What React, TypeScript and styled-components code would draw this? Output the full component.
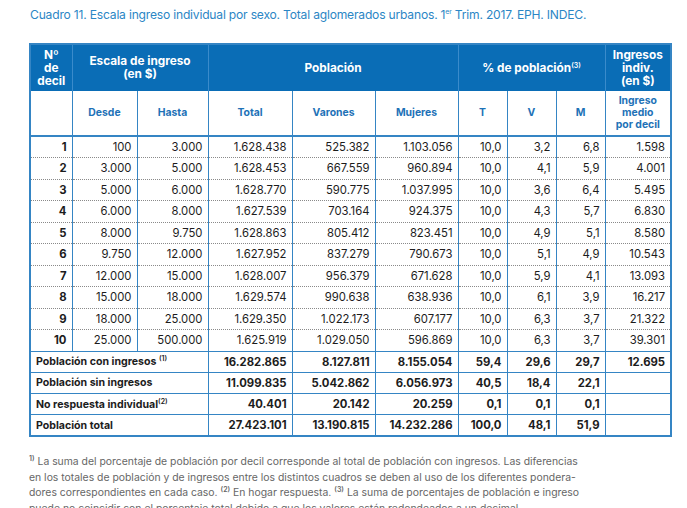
import React from 'react';
import styled, {createGlobalStyle} from 'styled-components';

const GlobalStyle = createGlobalStyle`
  body {
    margin: 0;
    background: #ffffff;
    font-family: Inter, "Open Sans", sans-serif;
  }
`

const widths = [42, 65, 71, 84, 83, 83, 49, 49, 49, 66];

type Row = string[];

const deciles: Row[] = [
    ['1', '100', '3.000', '1.628.438', '525.382', '1.103.056', '10,0', '3,2', '6,8', '1.598'],
    ['2', '3.000', '5.000', '1.628.453', '667.559', '960.894', '10,0', '4,1', '5,9', '4.001'],
    ['3', '5.000', '6.000', '1.628.770', '590.775', '1.037.995', '10,0', '3,6', '6,4', '5.495'],
    ['4', '6.000', '8.000', '1.627.539', '703.164', '924.375', '10,0', '4,3', '5,7', '6.830'],
    ['5', '8.000', '9.750', '1.628.863', '805.412', '823.451', '10,0', '4,9', '5,1', '8.580'],
    ['6', '9.750', '12.000', '1.627.952', '837.279', '790.673', '10,0', '5,1', '4,9', '10.543'],
    ['7', '12.000', '15.000', '1.628.007', '956.379', '671.628', '10,0', '5,9', '4,1', '13.093'],
    ['8', '15.000', '18.000', '1.629.574', '990.638', '638.936', '10,0', '6,1', '3,9', '16.217'],
    ['9', '18.000', '25.000', '1.629.350', '1.022.173', '607.177', '10,0', '6,3', '3,7', '21.322'],
    ['10', '25.000', '500.000', '1.625.919', '1.029.050', '596.869', '10,0', '6,3', '3,7', '39.301'],
];

const totals: {label: string, note?: string, values: Row}[] = [
    {label: 'Población con ingresos ', note: '(1)', values: ['16.282.865', '8.127.811', '8.155.054', '59,4', '29,6', '29,7', '12.695']},
    {label: 'Población sin ingresos', values: ['11.099.835', '5.042.862', '6.056.973', '40,5', '18,4', '22,1', '']},
    {label: 'No respuesta individual', note: '(2)', values: ['40.401', '20.142', '20.259', '0,1', '0,1', '0,1', '']},
    {label: 'Población total', values: ['27.423.101', '13.190.815', '14.232.286', '100,0', '48,1', '51,9', '']},
];

const App: React.FC = () => {
    return (
        <>
            <GlobalStyle/>
            <StyledPage>
                <StyledCorner/>
                <StyledTitle>
                    Cuadro 11. Escala ingreso individual por sexo. Total aglomerados urbanos. 1<sup>er</sup> Trim. 2017. EPH. INDEC.
                </StyledTitle>

                <StyledTable>
                    <colgroup>
                        {widths.map((w, i) => <col key={i} style={{width: w}}/>)}
                    </colgroup>
                    <thead>
                    <StyledTopHead>
                        <th>Nº<br/>de<br/>decil</th>
                        <th colSpan={2}>Escala de ingreso<br/>(en $)</th>
                        <th colSpan={3}>Población</th>
                        <th colSpan={3}>% de población<StyledNote>(3)</StyledNote></th>
                        <th>Ingresos<br/>indiv.<br/>(en $)</th>
                    </StyledTopHead>
                    <StyledSubHead>
                        <th></th>
                        <th>Desde</th>
                        <th>Hasta</th>
                        <th>Total</th>
                        <th>Varones</th>
                        <th>Mujeres</th>
                        <th>T</th>
                        <th>V</th>
                        <th>M</th>
                        <th>Ingreso<br/>medio<br/>por decil</th>
                    </StyledSubHead>
                    </thead>
                    <tbody>
                    {deciles.map((row, i) => (
                        <StyledDataRow key={row[0]} last={i === deciles.length - 1}>
                            {row.map((v, j) => <StyledCell key={j} bold={j === 0}>{v}</StyledCell>)}
                        </StyledDataRow>
                    ))}
                    {totals.map(t => (
                        <StyledTotalRow key={t.label}>
                            <StyledLabelCell colSpan={3}>
                                {t.label}{t.note && <StyledNote>{t.note}</StyledNote>}
                            </StyledLabelCell>
                            {t.values.map((v, j) => <StyledCell key={j} bold>{v}</StyledCell>)}
                        </StyledTotalRow>
                    ))}
                    </tbody>
                </StyledTable>

                <StyledRule/>

                <StyledFootnote>
                    <StyledNote>1)</StyledNote> La suma del porcentaje de población por decil corresponde al total de población con ingresos. Las diferencias<br/>
                    en los totales de población y de ingresos entre los distintos cuadros se deben al uso de los diferentes pondera-<br/>
                    dores correspondientes en cada caso. <StyledNote>(2)</StyledNote> En hogar respuesta. <StyledNote>(3)</StyledNote> La suma de porcentajes de población e ingreso<br/>
                    puede no coincidir con el porcentaje total debido a que los valores están redondeados a un decimal.
                </StyledFootnote>
            </StyledPage>
        </>
    );
};

export default App;

const StyledPage = styled.div`
  width: 687px;
  height: 508px;
  overflow: hidden;
  display: flex;
  flex-direction: column;
  align-items: flex-start;
`
const StyledCorner = styled.div`
  align-self: flex-end;
  width: 31px;
  height: 2px;
  background: #a9d3ee;
`
const StyledTitle = styled.div`
  margin: 7px 0 0 30px;
  color: #2b86c5;
  font-size: 12.1px;
  line-height: 16px;
  letter-spacing: -0.2px;

  sup {
    font-size: 7px;
    vertical-align: 5px;
    line-height: 0;
  }
`
const StyledNote = styled.sup`
  font-size: 7px;
  vertical-align: 4px;
  line-height: 0;
  font-weight: 600;
`
const StyledTable = styled.table`
  margin: 20px 0 0 29px;
  border-collapse: collapse;
  table-layout: fixed;
  width: 641px;
  font-size: 11.3px;
  color: #1c1c1c;
  border: 2px solid #3585c4;
`
const StyledTopHead = styled.tr`
  height: 47px;
  background: #0a6db6;
  color: #ffffff;

  th {
    font-size: 11.8px;
    font-weight: 700;
    line-height: 13px;
    text-align: center;
    border-left: 1px solid #3a8bcb;
    padding: 0;
  }
`
const StyledSubHead = styled.tr`
  height: 45px;
  color: #1e72b7;

  th {
    font-size: 10.4px;
    font-weight: 700;
    line-height: 12px;
    text-align: center;
    border: 1px solid #3585c4;
    border-width: 0 1px 2px 1px;
    padding: 0;
  }
`
const StyledDataRow = styled.tr<{last?: boolean}>`
  height: 21.5px;

  td {
    border-bottom: ${p => p.last ? '1.5px solid #3585c4' : '1px dotted #8a8a8a'};
  }
`
const StyledCell = styled.td<{bold?: boolean}>`
  text-align: right;
  padding: 0 5px 0 0;
  font-weight: ${p => p.bold ? 700 : 400};
  border-left: 1.5px solid #3585c4;
  border-right: 1.5px solid #3585c4;
  white-space: nowrap;
`
const StyledTotalRow = styled.tr`
  height: 21.3px;

  td {
    border: 1.5px solid #3585c4;
  }
`
const StyledLabelCell = styled.td`
  text-align: left;
  padding: 0 0 0 5px;
  font-weight: 700;
  font-size: 10.6px;
  white-space: nowrap;
`
const StyledRule = styled.div`
  margin: 10px 0 0 29px;
  width: 640px;
  height: 1px;
  background: #f1f1f1;
`
const StyledFootnote = styled.div`
  margin: 7px 0 0 29px;
  color: #666666;
  font-size: 10.4px;
  line-height: 15.5px;
  white-space: nowrap;
`
